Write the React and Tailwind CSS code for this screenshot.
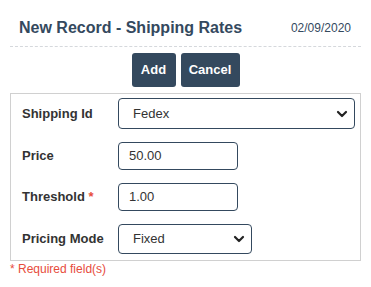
export default function App() {
  const Chevron = () => (
    <svg width="12" height="8" viewBox="0 0 12 8" className="shrink-0">
      <path d="M2 2 L6 6 L10 2" fill="none" stroke="#222" strokeWidth="2.2" strokeLinecap="round" strokeLinejoin="round" />
    </svg>
  );
  return (
    <div className="w-[371px] h-[287px] bg-white font-['Liberation_Sans',Arial,sans-serif] text-[#333]">
      <div className="px-[10px]">
        <div className="flex items-end justify-between pl-[9px] pr-[10px] pt-[19px] pb-[9px] border-b border-dashed border-[#d5d8dc]">
          <div className="text-[16px] leading-[18px] font-bold text-[#34495e]">New Record - Shipping Rates</div>
          <div className="text-[12px] leading-[16px] text-[#34495e] mb-[1px]">02/09/2020</div>
        </div>
        <div className="flex justify-center gap-[5px] pt-[6px] pb-[6px]">
          <button className="w-[44px] h-[34px] rounded-[3px] bg-[#34495e] text-white text-[13px] font-bold">Add</button>
          <button className="w-[59px] h-[34px] rounded-[3px] bg-[#34495e] text-white text-[13px] font-bold">Cancel</button>
        </div>
        <div className="border border-[#d0d0d0] pl-[11px] pr-[5px] pt-[4px] pb-[6px] flex flex-col gap-[13px]">
          <div className="flex items-center">
            <div className="w-[96px] text-[13px] font-bold">Shipping Id</div>
            <div className="flex-1 h-[31px] rounded-[4px] border border-[#34495e] flex items-center justify-between pl-[14px] pr-[6px] text-[13px] text-[#333]">
              <span>Fedex</span>
              <Chevron />
            </div>
          </div>
          <div className="flex items-center">
            <div className="w-[96px] text-[13px] font-bold">Price</div>
            <div className="w-[120px] h-[28px] rounded-[4px] border border-[#34495e] flex items-center pl-[10px] text-[13px] text-[#333]">50.00</div>
          </div>
          <div className="flex items-center">
            <div className="w-[96px] text-[13px] font-bold">Threshold <span className="text-[#e74c3c]">*</span></div>
            <div className="w-[120px] h-[28px] rounded-[4px] border border-[#34495e] flex items-center pl-[10px] text-[13px] text-[#333]">1.00</div>
          </div>
          <div className="flex items-center">
            <div className="w-[96px] text-[13px] font-bold">Pricing Mode</div>
            <div className="w-[134px] h-[30px] rounded-[4px] border border-[#34495e] flex items-center justify-between pl-[14px] pr-[6px] text-[13px] text-[#333]">
              <span>Fixed</span>
              <Chevron />
            </div>
          </div>
        </div>
        <div className="text-[12px] leading-[14px] text-[#e74c3c] pt-[1px]">* Required field(s)</div>
      </div>
    </div>
  );
}
